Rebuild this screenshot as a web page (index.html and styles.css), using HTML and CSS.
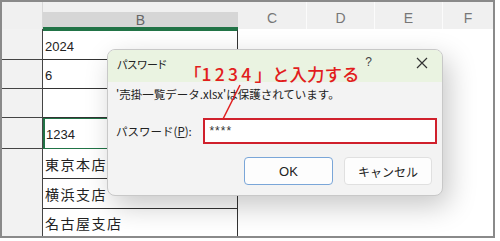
FILE: index.html
```html
<!DOCTYPE html>
<html lang="ja">
<head>
<meta charset="utf-8">
<link rel="stylesheet" href="styles.css">
</head>
<body>
<div class="frame">
  <div class="sheet">
    <div class="hdr hdr-a"></div>
    <div class="hdr hdr-b"><span>B</span></div>
    <div class="hdr hdr-c">C</div>
    <div class="hdr hdr-d">D</div>
    <div class="hdr hdr-e">E</div>
    <div class="hdr hdr-f">F</div>

    <div class="cola r1 lined"></div><div class="cellb r1 num">2024</div><div class="rest r1"></div>
    <div class="cola r2 lined"></div><div class="cellb r2 num">6</div><div class="rest r2"></div>
    <div class="cola r3 lined"></div><div class="cellb r3"></div><div class="rest r3"></div>
    <div class="cola r4 lined"></div><div class="cellb r4 num active">1234</div><div class="rest r4"></div>
    <div class="cola r5"></div><div class="cellb r5 jp">東京本店</div><div class="rest r5"></div>
    <div class="cola r6"></div><div class="cellb r6 jp">横浜支店</div><div class="rest r6"></div>
    <div class="cola r7"></div><div class="cellb r7 jp">名古屋支店</div><div class="rest r7"></div>
  </div>

  <div class="dialog">
    <div class="titlebar">
      <span class="title">パスワード</span>
      <span class="help">?</span>
      <svg class="close" width="12" height="12" viewBox="0 0 12 12"><path d="M1 1L11 11M11 1L1 11" stroke="#333" stroke-width="1.2" fill="none"/></svg>
    </div>
    <div class="dbody">
      <div class="msg">'売掛一覧データ.xlsx'は保護されています。</div>
      <div class="pwrow">
        <span class="label">パスワード(<u>P</u>):</span>
        <div class="input">****</div>
      </div>
      <div class="btns">
        <div class="btn ok">OK</div>
        <div class="btn cancel">キャンセル</div>
      </div>
    </div>
  </div>

  <div class="note">「<span class="digits">1234</span>」と入力する</div>
  <svg class="pointer" width="30" height="40" viewBox="0 0 30 40"><path d="M21 2L4 36" stroke="#e02020" stroke-width="1.6" fill="none"/></svg>
</div>
</body>
</html>
```

FILE: styles.css
```css
* { box-sizing: border-box; }
html, body { margin: 0; padding: 0; background: #fff; }
body { width: 500px; height: 241px; overflow: hidden; font-family: "Noto Sans CJK JP", "Noto Sans", sans-serif; }

.frame {
  position: relative;
  width: 495px;
  height: 238px;
  border: 2px solid #8a8a8a;
  overflow: hidden;
  background: #fff;
}

.sheet {
  display: grid;
  grid-template-columns: 41px 195px 69px 68px 68px 1fr;
  grid-template-rows: 27px 31px 29px 29px 31px 30px 30px 1fr;
  height: 100%;
}

.hdr { background: #f0f0f0; color: #777; font-family: "Liberation Sans", sans-serif; font-size: 14px; display: flex; align-items: flex-end; justify-content: center; padding-bottom: 3px; }
.hdr-a { border-right: 1px solid #d8d8d8; }
.hdr-b { padding: 10px 0 0; align-items: stretch; }
.hdr-b span { flex: 1; background: #d6d6d6; border-bottom: 2px solid #217346; display: flex; align-items: center; justify-content: center; padding-top: 1px; color: #666; }
.hdr-c, .hdr-d, .hdr-e { border-right: 1px solid #fbfbfb; }

.cola { grid-column: 1; background: #f2f2f2; border-right: 1px solid #444; }
.cola.lined { border-bottom: 1px solid #444; }
.cellb { grid-column: 2; border-bottom: 1px solid #333; border-right: 1px solid #333; padding-left: 2px; display: flex; align-items: center; color: #222; }
.rest { grid-column: 3 / 7; background: #fff; }
.r7.cellb { border-bottom: none; }
.num { font-family: "Liberation Sans", sans-serif; font-size: 13px; padding-top: 2px; }
.jp { font-size: 14px; letter-spacing: 1.5px; font-family: "Noto Sans CJK JP", sans-serif; }
.active { border: 1px solid #217346; border-left: 2px solid #217346; border-right: 1px solid #217346; padding-left: 1px; }
.cellb.r1 { border-top: 2px solid #217346; }

.dialog {
  position: absolute;
  left: 105px;
  top: 47px;
  width: 336px;
  height: 147px;
  border: 1px solid #c8c8c8;
  border-radius: 8px;
  background: #f3f3f3;
  box-shadow: 6px 10px 28px rgba(0,0,0,0.22);
  overflow: hidden;
}
.titlebar {
  height: 32px;
  background: #eaf3e1;
  display: flex;
  align-items: center;
  padding: 0 0 4px 9px;
  position: relative;
}
.title { font-size: 11px; color: #222; flex: 1; font-feature-settings: "palt"; }
.help { font-size: 12px; color: #444; margin-right: 44px; margin-top: -5px; font-family: "Liberation Sans", sans-serif; }
.close { margin-right: 14px; margin-top: -2px; }
.dbody { padding: 3px 5px 0 8px; }
.msg { font-size: 11.5px; color: #222; height: 18px; line-height: 18px; }
.pwrow { display: flex; align-items: center; margin-top: 15px; }
.label { font-size: 11.5px; color: #222; width: 88px; }
.label u { text-decoration-thickness: 1px; }
.input {
  width: 235px;
  height: 26px;
  border: 2px solid #d0202c;
  background: #fff;
  font-family: "Liberation Sans", sans-serif;
  font-size: 12px;
  letter-spacing: 1px;
  padding: 4px 0 0 4px;
  color: #333;
}
.btns { display: flex; justify-content: flex-end; gap: 11px; margin-top: 13px; padding-right: 5px; }
.btn { width: 89px; height: 28px; border-radius: 4px; background: #fdfdfd; display: flex; align-items: center; justify-content: center; font-size: 12px; color: #222; }
.ok { border: 1px solid #7aa6d8; font-family: "Liberation Sans", sans-serif; font-size: 13px; }
.cancel { border: 1px solid #e0e0e0; width: 88px; }

.note {
  position: absolute;
  left: 182px;
  top: 59px;
  font-size: 17.5px;
  font-weight: 500;
  color: #e21d1d;
  font-family: "Noto Sans CJK JP", sans-serif;
  line-height: 26px;
  white-space: nowrap;
}
.digits { letter-spacing: 3.3px; }
.pointer { position: absolute; left: 217px; top: 81px; }
```
